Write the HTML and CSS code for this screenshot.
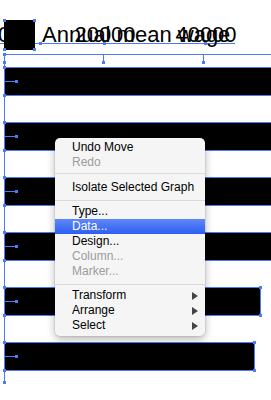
FILE: index.html
```html
<!DOCTYPE html>
<html lang="en">
<head>
    <meta charset="UTF-8">
    <meta name="viewport" content="width=device-width, initial-scale=1.0">
    <title>Bar Graph - Context Menu</title>
    <link rel="stylesheet" href="styles.css">
</head>
<body>
    <div class="chart">
        <div class="legend">
            <span class="baseline">
                <span class="handle" style="left:39px"></span>
                <span class="handle" style="left:103px"></span>
                <span class="handle" style="left:204px"></span>
            </span>
            <span class="label" style="left:4px">0</span>
            <div class="swatch">
                <span class="handle tl"></span>
                <span class="handle tr"></span>
                <span class="handle bl"></span>
                <span class="handle br"></span>
            </div>
            <span class="title">Annual mean wage</span>
            <span class="label" style="left:105px">20000</span>
            <span class="label" style="left:206px">40000</span>
        </div>

        <div class="plot">
            <span class="handle axis-top"></span>
            <div class="ticks">
                <span class="tick first"></span>
                <span class="tick"></span>
                <span class="tick"></span>
            </div>
            <div class="bars">
                <div class="bar wide"><span class="handle tl"></span><span class="handle bl"></span><span class="mark"></span></div>
                <div class="bar wide"><span class="handle tl"></span><span class="handle bl"></span><span class="mark"></span></div>
                <div class="bar wide"><span class="handle tl"></span><span class="handle bl"></span><span class="mark"></span></div>
                <div class="bar wide"><span class="handle tl"></span><span class="handle bl"></span><span class="mark"></span></div>
                <div class="bar" style="width:256px"><span class="handle tl"></span><span class="handle bl"></span><span class="handle tr"></span><span class="handle br"></span><span class="mark"></span></div>
                <div class="bar" style="width:250px"><span class="handle tl"></span><span class="handle bl"></span><span class="handle tr"></span><span class="handle br"></span><span class="mark"></span></div>
            </div>
            <span class="handle axis-bottom"></span>
        </div>
    </div>

    <div class="menu">
        <div class="item">Undo Move</div>
        <div class="item disabled">Redo</div>
        <div class="sep first"></div>
        <div class="item">Isolate Selected Graph</div>
        <div class="sep second"></div>
        <div class="item">Type...</div>
        <div class="item active">Data...</div>
        <div class="item">Design...</div>
        <div class="item disabled">Column...</div>
        <div class="item disabled">Marker...</div>
        <div class="sep third"></div>
        <div class="item">Transform <span class="arrow"></span></div>
        <div class="item">Arrange <span class="arrow"></span></div>
        <div class="item">Select <span class="arrow"></span></div>
    </div>
</body>
</html>
```

FILE: styles.css
```css
body {
    margin: 0;
    width: 271px;
    height: 400px;
    overflow: hidden;
    background-color: #fff;
    font-family: "Liberation Sans", Arial, sans-serif;
    position: relative;
}

.chart {
    padding-top: 20px;
}

/* selection handles */
.handle {
    position: absolute;
    width: 3px;
    height: 3px;
    background-color: #4a7cf6;
    z-index: 2;
}

/* legend + axis labels */
.legend {
    position: relative;
    height: 30px;
    margin-bottom: 4px;
}

.swatch {
    position: relative;
    margin-left: 4px;
    width: 31px;
    height: 30px;
    background-color: #000;
    z-index: 1;
}

    .swatch .tl { left: -1px; top: -1px; }
    .swatch .tr { right: -1px; top: -1px; }
    .swatch .bl { left: -1px; bottom: -1px; }
    .swatch .br { right: -1px; bottom: -1px; }

.baseline {
    position: absolute;
    left: 0;
    top: 23px;
    width: 235px;
    height: 1px;
    background-color: #4a7cf6;
}

    .baseline .handle {
        top: -1px;
    }

.title, .label {
    position: absolute;
    top: 4px;
    font-size: 22px;
    line-height: 22px;
    color: #000;
    white-space: nowrap;
}

.title {
    left: 42px;
}

.label {
    transform: translateX(-50%);
}

/* plot area */
.plot {
    position: relative;
    margin-left: 4px;
    border-left: 1px solid #4a7cf6;
    border-top: 1px solid #4a7cf6;
    padding-bottom: 11px;
}

    .plot .axis-top { left: -2px; top: -2px; }
    .plot .axis-bottom { left: -2px; bottom: -2px; }

.ticks {
    display: flex;
    height: 12px;
}

.tick {
    position: relative;
    width: 100px;
    height: 8px;
    border-right: 1px solid #4a7cf6;
    box-sizing: border-box;
}

    .tick::after {
        content: "";
        position: absolute;
        right: -2px;
        bottom: -1px;
        width: 3px;
        height: 3px;
        background-color: #4a7cf6;
    }

    .tick.first {
        width: 0;
        margin-left: -1px;
        border-right: none;
    }

        .tick.first::after {
            right: -2px;
        }

.bars {
    display: flex;
    flex-direction: column;
    gap: 26px;
}

.bar {
    position: relative;
    height: 29px;
    box-sizing: border-box;
    background-color: #000;
    border: 1px solid #4a7cf6;
    border-left: none;
}

    .bar.wide {
        width: 300px;
    }

    .bar .tl { left: -2px; top: -2px; }
    .bar .bl { left: -2px; bottom: -2px; }
    .bar .tr { right: -2px; top: -2px; }
    .bar .br { right: -2px; bottom: -2px; }

.mark {
    position: absolute;
    left: -1px;
    top: 13px;
    width: 12px;
    height: 1px;
    background-color: #4a7cf6;
}

    .mark::after {
        content: "";
        position: absolute;
        right: -2px;
        top: -1px;
        width: 3px;
        height: 3px;
        background-color: #4a7cf6;
    }

/* context menu */
.menu {
    position: absolute;
    left: 55px;
    top: 138px;
    width: 150px;
    padding: 2px 0 3px;
    background-color: #f5f5f5;
    border-radius: 5px;
    box-shadow: 0 3px 9px rgba(0,0,0,0.3), 0 0 0 1px rgba(0,0,0,0.06);
    font-size: 12px;
    z-index: 5;
}

.item {
    display: flex;
    justify-content: space-between;
    align-items: center;
    height: 15px;
    line-height: 15px;
    padding: 0 7px 0 17px;
    color: #000;
    white-space: nowrap;
}

    .item.disabled {
        color: #9c9c9c;
    }

    .item.active {
        background: linear-gradient(#6088f7, #2c5ef2);
        color: #fff;
    }

.sep {
    height: 1px;
    background-color: #dadada;
}

    .sep.first { margin: 3px 0 6px; }
    .sep.second { margin: 5px 0 3px; }
    .sep.third { margin: 5px 0 3px; }

.arrow {
    width: 0;
    height: 0;
    border-left: 6px solid #444;
    border-top: 4px solid transparent;
    border-bottom: 4px solid transparent;
}
```
